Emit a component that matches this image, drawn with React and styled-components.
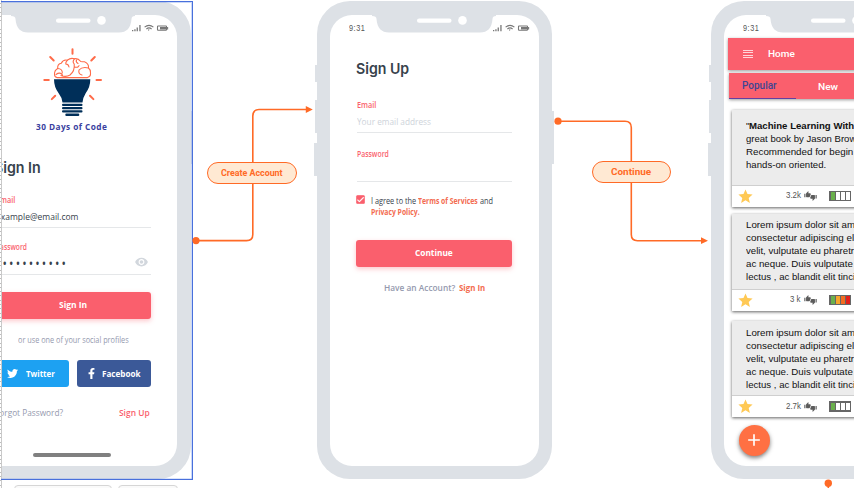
import React, { useLayoutEffect, useRef, useState } from "react";
import styled, { createGlobalStyle, css } from "styled-components";
import { MdRemoveRedEye, MdThumbDown, MdThumbUp, MdStar, MdCheck, MdAdd } from "react-icons/md";
import { FaTwitter, FaFacebookF } from "react-icons/fa";

const ui = `"Open Sans", "Noto Sans", sans-serif`;
const coral = "#fa5f6d";
const flow = "#ff6a26";

const GlobalStyle = createGlobalStyle`
  * { box-sizing: border-box; }
  html, body { margin: 0; background: #fff; overflow: hidden; }
`;

const Canvas = styled.main`
  position: relative;
  width: 855px;
  height: 488px;
  overflow: hidden;
  background: #fff;
  font-family: ${ui};
`;

const Workspace = styled.div`
  position: absolute;
  inset: 0 1px 0 2px;
  overflow: hidden;
`;

const Ruler = styled.div`
  position: absolute;
  left: 0;
  top: 0;
  width: 2px;
  height: 488px;
  border-right: 1px solid #c9c9c9;
  background: repeating-linear-gradient(#fff 0 3px, #bdbdbd 3px 4px, #fff 4px 4.3px);
`;

/* text stretched or condensed to a set measure */
const Measure = styled.span`
  display: block;
  flex: none;
  width: ${(p) => p.$w}px;
  height: ${(p) => p.$h || 12}px;
  line-height: ${(p) => p.$h || 12}px;
  white-space: pre;
  font-family: ${(p) => p.$font || ui};
  font-size: ${(p) => p.$size || 9.4}px;
  font-weight: ${(p) => p.$weight || 500};
  letter-spacing: ${(p) => p.$track || 0}px;
  color: ${(p) => p.$color || "#37424c"};
`;
const Glyphs = styled.span`
  display: inline-block;
  transform-origin: 0 50%;
`;
function Text({ children, ...rest }) {
  const ref = useRef(null);
  const [scale, setScale] = useState(1);
  useLayoutEffect(() => {
    setScale(rest.$w / ref.current.offsetWidth);
  }, [rest.$w]);
  return (
    <Measure {...rest}>
      <Glyphs ref={ref} style={{ transform: `scaleX(${scale})` }}>{children}</Glyphs>
    </Measure>
  );
}

/* ---------- phone shell ---------- */
const Shell = styled.section`
  position: absolute;
  left: ${(p) => p.$x - 2}px;
  top: 1px;
  width: 235px;
  height: 478px;
  padding: 14px 13.3px 13px 13px;
  border-radius: 33px;
  background: #dde1e6;
`;
const Screen = styled.div`
  width: 208.7px;
  height: 451px;
  border-radius: 22px;
  background: #fff;
  overflow: hidden;
`;
const SideKey = styled.i`
  position: absolute;
  top: ${(p) => p.$y}px;
  height: ${(p) => p.$h}px;
  width: 3px;
  background: #dde1e6;
  ${(p) => (p.$right ? css`right: -2px;` : css`left: ${p.$out ? -3 : -2}px;`)}
`;
const NotchArt = styled.svg`
  position: absolute;
  left: 54px;
  top: 13px;
  width: 126px;
  height: 20px;
`;
const StatusBar = styled.header`
  display: flex;
  align-items: center;
  height: 23px;
  padding: 3px 8.5px 0 19px;
`;
const StatusArt = styled.svg`
  width: 37px;
  height: 8px;
  margin-left: auto;
`;
function Phone({ x, time = true, children }) {
  return (
    <Shell $x={x}>
      <SideKey $y={64} $h={17} />
      <SideKey $y={99} $h={33} />
      <SideKey $y={142} $h={33} $out />
      <SideKey $y={110} $h={53} $right />
      <Screen>
        <StatusBar>
          {time && <Text $w={16} $h={13} $size={8.2} $track={0.6} $color="#555" $font={`"Liberation Sans", sans-serif`}>9:31</Text>}
          <StatusArt viewBox="0 0 37 8">
            <g fill="#777">
              <path d="M0 6h1.3v1.3H0zM2.3 5.2h1.3v2.1H2.3zM4.6 3.6h1.3v3.7H4.6zM7.3 1h1.3v6.3H7.3z" />
              <path d="M15.8 5.5l1.8 0-.9 1.6zM30 3h4v2.4h-6V3z" />
            </g>
            <g fill="none" stroke="#777" strokeWidth="1.1">
              <path d="M12.6 3.2Q17 -.5 21.400 3.200M14.400 5Q17 2.800 19.600 5" />
              <rect x="25.500" y="2" width="9" height="4.300" rx=".6" />
              <path d="M35.600 3v2.400" />
            </g>
          </StatusArt>
        </StatusBar>
        {children}
      </Screen>
      <NotchArt viewBox="0 0 126 20">
        <path fill="#dde1e6" d="M1 0H125V2Q121.500 2 121.500 5Q120.500 18.500 109 18.500H18Q6.500 18.500 5.500 5Q5.500 2 1 2Z" />
        <rect x="46" y="4.500" width="34.500" height="4.300" rx="2.100" fill="#fff" />
        <circle cx="91.500" cy="6.400" r="4.300" fill="#fff" />
      </NotchArt>
    </Shell>
  );
}

/* ---------- form parts ---------- */
const Form = styled.div`
  display: flex;
  flex-direction: column;
  width: 156px;
  margin-left: 26px;
`;
const Line = styled.div`
  display: flex;
  align-items: center;
  height: ${(p) => p.$h || 12}px;
  margin-top: ${(p) => p.$mt || 0}px;
  margin-left: ${(p) => p.$ml || 0}px;
  padding-left: ${(p) => p.$pl || 0}px;
  gap: ${(p) => p.$gap || 0}px;
`;
const Field = styled(Line)`
  width: 155px;
  margin-left: 1px;
  border-bottom: 1.5px solid #e5e7e9;
  align-items: flex-start;
`;
const Eye = styled(MdRemoveRedEye)`
  width: 15px;
  height: 14px;
  margin: -2px 2px 0 auto;
  color: #d2d7dd;
`;
const Button = styled.button`
  display: flex;
  align-items: center;
  justify-content: center;
  width: ${(p) => p.$w || 156}px;
  height: 27px;
  margin: ${(p) => p.$mt || 0}px 0 0;
  padding: 0 ${(p) => p.$pr || 0}px 0 0;
  border: 0;
  border-radius: 3px;
  background: ${(p) => p.$bg || coral};
  box-shadow: ${(p) => (p.$bg ? "none" : "0 2px 5px rgba(250,95,109,.35)")};
  color: #fff;
  gap: ${(p) => p.$gap || 0}px;
`;
const CheckBox = styled.span`
  display: flex;
  width: 9px;
  height: 9px;
  margin-right: 5.500px;
  border-radius: 1.500px;
  background: ${coral};
  color: #fff;
  svg { width: 9px; height: 9px; stroke-width: 1px; stroke: #fff; }
`;
const HomeBar = styled.div`
  width: 78px;
  height: 4px;
  margin: 34px 0 0 38px;
  border-radius: 2px;
  background: #808080;
`;
const LogoBlock = styled.div`
  display: flex;
  flex-direction: column;
  align-items: center;
  width: 72px;
  margin: 9px 0 0 41px;
  svg { width: 60px; height: 70px; margin-left: 1px; }
`;

function BulbLogo() {
  return (
    <svg viewBox="42 47 60 70">
      <g stroke="#ff6b49" fill="none" strokeLinecap="round" strokeWidth="2">
        <path d="M72.500 49.300v4.500M50.200 57l3.500 3.500M94.800 57l-3.500 3.500M44.300 80h4.500M96.500 80h4.500M55.200 95.700l-3.400 3.400M90 95.700l3.400 3.400" />
        <g strokeWidth="1.100">
          <path d="M57.300 77.600H87.500Q91 76.500 90.500 72.500Q90.500 69.500 88.500 68Q89 63.500 84.500 61.700Q82.300 61.700 80.800 61.500Q78 58 74.500 58.800Q70.500 57.500 67.500 60.200Q63 59.300 61.300 63.200Q57.300 63.700 57.700 68.500Q54.300 70.300 54.500 74.500Q54.500 77 57.300 77.600Z" />
          <path d="M57.700 68.500Q62.500 68.800 62.300 73M67.500 60.200Q65.500 62 65.800 64Q68.500 64 69 67M74.500 58.800Q72 61.500 74.200 64Q75 71 70 75Q66 77.500 61 75.500M74.700 67Q78.500 68 79 65.500M76.500 60Q75.500 62 78 63.500M88.500 68Q82 66.500 79 70Q78 74 82 75M56 74.500Q60 71.500 62.500 75" />
        </g>
      </g>
      <path fill="#002f59" d="M54 79.300H90.300Q90.300 87 85.800 93Q82.700 98 82.500 102.500H62.500Q62 97.500 58.500 93Q54 87 54 79.300Z" />
      <g fill="#002f59">
        <rect x="62" y="103.700" width="20.500" height="2.200" rx="1" />
        <rect x="62" y="107" width="20.500" height="2.200" rx="1" />
        <rect x="62" y="110.300" width="20.500" height="2.200" rx="1" />
        <rect x="65.300" y="113.600" width="14" height="2.400" rx="1.100" />
      </g>
    </svg>
  );
}

function SignIn() {
  return (
    <Phone x={-44.5} time={false}>
      <Form>
        <LogoBlock>
          <BulbLogo />
          <Line $mt={4}><Text $w={71.500} $size={9.400} $weight={700} $track={0.5} $color="#3a3fa0">30 Days of Code</Text></Line>
        </LogoBlock>
        <Line $h={22} $mt={24} $ml={-0.500}><Text $h={22} $w={47} $size={14.800} $weight={600} $font={`Inter, sans-serif`}>Sign In</Text></Line>
        <Line $mt={14.500} $pl={1}><Text $w={19.500} $color={coral} $size={9} $weight={600}>Email</Text></Line>
        <Field $h={17.500} $mt={5}><Text $w={82.500}>example@email.com</Text></Field>
        <Line $mt={12.500} $pl={1}><Text $w={31} $color={coral} $size={9} $weight={600}>Password</Text></Line>
        <Field $h={18} $mt={4.500}>
          <Text $w={72.500} $h={13} $size={14} $track={2.600}>•••••••••••</Text>
          <Eye />
        </Field>
        <Button $mt={16.500}><Text $w={28} $weight={700} $color="#fff">Sign In</Text></Button>
        <Line $mt={15.500} $pl={23}><Text $w={111} $color="#9499ae" $size={9}>or use one of your social profiles</Text></Line>
        <Line $h={27} $mt={14} $gap={8}>
          <Button $w={74} $bg="#1da1f2" $gap={8} $pr={2}><FaTwitter size={11} /><Text $w={28.500} $weight={700} $color="#fff">Twitter</Text></Button>
          <Button $w={74} $bg="#3b5998" $gap={5}><FaFacebookF size={11} /><Text $w={39} $weight={700} $color="#fff">Facebook</Text></Button>
        </Line>
        <Line $mt={20} $gap={56.500}>
          <Text $w={68} $color="#9499ae">Forgot Password?</Text>
          <Text $w={30.500} $color={coral} $weight={600}>Sign Up</Text>
        </Line>
        <HomeBar />
      </Form>
    </Phone>
  );
}

function SignUp() {
  const terms = { $h: 11, $size: 9 };
  const link = { ...terms, $weight: 700, $color: "#f36b50" };
  return (
    <Phone x={317}>
      <Form>
        <Line $h={22} $mt={20}><Text $h={22} $w={53.500} $size={14.800} $weight={600} $font={`Inter, sans-serif`}>Sign Up</Text></Line>
        <Line $mt={18.500} $pl={1}><Text $w={19.500} $color={coral} $size={9} $weight={600}>Email</Text></Line>
        <Field $h={17.500} $mt={5}><Text $w={74} $color="#ced3da">Your email address</Text></Field>
        <Line $mt={14.500} $pl={1}><Text $w={32} $color={coral} $size={9} $weight={600}>Password</Text></Line>
        <Field $h={18} $mt={4} />
        <Line $h={9} $mt={13}>
          <CheckBox><MdCheck /></CheckBox>
          <Line $h={11} $gap={2} $mt={3}>
            <Text $w={45.500} {...terms}>I agree to the</Text>
            <Text $w={59.500} {...link}>Terms of Services</Text>
            <Text $w={13} {...terms}>and</Text>
          </Line>
        </Line>
        <Line $h={11} $mt={2.500} $pl={14.500}><Text $w={48.500} {...link}>Privacy Policy.</Text></Line>
        <Button $mt={22.500}><Text $w={38} $weight={700} $color="#fff">Continue</Text></Button>
        <Line $mt={15.500} $pl={28} $gap={4}>
          <Text $w={71} $color="#9499ae" $weight={600}>Have an Account?</Text>
          <Text $w={26} $color="#f36b50" $weight={700}>Sign In</Text>
        </Line>
      </Form>
    </Phone>
  );
}

/* ---------- home feed ---------- */
const Feed = styled.div`
  display: flex;
  flex-direction: column;
  width: 204px;
`;
const AppBar = styled.div`
  display: flex;
  align-items: center;
  gap: 15px;
  height: 31.500px;
  margin-left: 4.300px;
  padding-left: 15px;
  background: ${coral};
  box-shadow: 0 1px 3px rgba(0,0,0,.4);
`;
const Burger = styled.span`
  width: 10px;
  height: 8px;
  background: repeating-linear-gradient(#ffd6da 0 1px, transparent 1px 2.300px);
`;
const Tabs = styled.div`
  display: flex;
  height: 26.500px;
  margin: 3px 0 0 5.300px;
  background: ${coral};
  box-shadow: 0 1px 3px rgba(0,0,0,.4);
`;
const Tab = styled.div`
  width: 67px;
  padding: ${(p) => (p.$on ? "7px 0 0 13px" : "8px 0 0 22px")};
  border-bottom: ${(p) => (p.$on ? "1.500px solid #643fa0" : "0")};
`;
const Card = styled.article`
  display: flex;
  flex-direction: column;
  height: 96.500px;
  margin: ${(p) => p.$mt}px 0 0 8.300px;
  background: #ececec;
  box-shadow: 0 1px 3px rgba(0,0,0,.62);
`;
const CardText = styled.div`
  height: 75.500px;
  padding: ${(p) => p.$pt}px 0 0 14px;
  border-bottom: 1px solid #cfcfcf;
`;
const CardFoot = styled.footer`
  display: flex;
  align-items: center;
  height: 21px;
  padding-left: 5px;
  background: #fff;
`;
const Star = styled(MdStar)`
  flex: none;
  width: 17px;
  height: 17px;
  color: #ffc955;
`;
const Count = styled.span`
  display: flex;
  justify-content: flex-end;
  width: 46.500px;
`;
const Votes = styled.span`
  display: flex;
  width: 13px;
  height: 10px;
  margin: 0 12px 0 4px;
  color: #5b5b5b;
  svg { width: 7px; height: 7px; flex: none; }
  svg + svg { margin: 3px 0 0 -1px; }
`;
const Meter = styled.span`
  display: flex;
  gap: 1.300px;
  width: 21.500px;
  height: 10.500px;
  padding: 1.300px;
  background: #666;
`;
const Cell = styled.i`
  flex: 1;
  background: ${(p) => p.$c};
`;
const Fab = styled.div`
  display: flex;
  align-items: center;
  justify-content: center;
  width: 31px;
  height: 31px;
  margin: 7.500px 0 0 15px;
  border-radius: 50%;
  background: #ff7043;
  color: #fff;
  box-shadow: 0 2px 4px rgba(0,0,0,.5);
`;
const arial = { $font: `"Liberation Sans", Arial, sans-serif`, $size: 9.8, $h: 13, $color: "#111", $weight: 400 };
const lorem = [
  ["Lorem ipsum dolor sit am", 109],
  ["consectetur adipiscing el", 108],
  ["velit, vulputate eu pharetr", 108],
  ["ac neque. Duis vulputate", 107],
  ["lectus , ac blandit elit tinci", 109],
];
const machine = [
  ["great book by Jason Brow", 110],
  ["Recommended for begin", 107],
  ["hands-on oriented.", 80.5],
];
const calm = ["#6ab04c", "#fff", "#fff", "#fff"];
const hot = ["#6ab04c", "#f7a52d", "#f36c21", "#e3201b"];

function Post({ mt, pt = 5, lines, count, countW, levels, children }) {
  return (
    <Card $mt={mt}>
      <CardText $pt={pt}>
        {children}
        {lines.map(([t, w]) => <Text key={t} {...arial} $w={w}>{t}</Text>)}
      </CardText>
      <CardFoot>
        <Star />
        <Count><Text $w={countW} $size={8.200} $color="#555" $font={`"Liberation Sans", sans-serif`}>{count}</Text></Count>
        <Votes><MdThumbUp /><MdThumbDown /></Votes>
        <Meter>{levels.map((c, i) => <Cell key={i} $c={c} />)}</Meter>
      </CardFoot>
    </Card>
  );
}

const Quote = styled.div`
  display: flex;
`;

function Home() {
  return (
    <Phone x={710.7}>
      <Feed>
        <AppBar>
          <Burger />
          <Text $w={27} $color="#fff" $size={9.600} $weight={500} $font="Roboto, sans-serif">Home</Text>
        </AppBar>
        <Tabs>
          <Tab $on><Text $w={35} $color="#3e4593" $size={10} $weight={500} $font="Roboto, sans-serif">Popular</Text></Tab>
          <Tab><Text $w={20} $color="#fff" $size={9.600} $weight={500} $font="Roboto, sans-serif">New</Text></Tab>
        </Tabs>
        <Post mt={11} pt={9} lines={machine} count="3.2k" countW={14.500} levels={calm}>
          <Quote>
            <Text {...arial} $w={3}>"</Text>
            <Text {...arial} $weight={700} $w={105}>Machine Learning With</Text>
          </Quote>
        </Post>
        <Post mt={7.500} pt={4} lines={lorem} count="3 k" countW={10.500} levels={hot} />
        <Post mt={10} pt={5} lines={lorem} count="2.7k" countW={14.500} levels={calm} />
        <Fab><MdAdd size={20} /></Fab>
      </Feed>
    </Phone>
  );
}

/* ---------- canvas overlays ---------- */
const Selection = styled.div`
  position: absolute;
  left: 1px;
  top: 1px;
  width: 192px;
  height: 479px;
  border: 1px solid #4970dc;
  border-left: 0;
  box-shadow: inset -1px 1px 0 rgba(105,145,235,.35), inset 0 -1px 0 rgba(105,145,235,.25);
`;
const Wires = styled.svg`
  position: absolute;
  left: 0;
  top: 0;
  width: 855px;
  height: 488px;
`;
const Pill = styled.div`
  position: absolute;
  left: ${(p) => p.$x}px;
  top: ${(p) => p.$y}px;
  width: ${(p) => p.$w}px;
  height: 22px;
  display: flex;
  align-items: center;
  justify-content: center;
  border: 1.500px solid ${flow};
  border-radius: 11px;
  background: #ffe9d3;
`;
const Outline = styled.div`
  position: absolute;
  left: ${(p) => p.$x}px;
  top: 485px;
  width: ${(p) => p.$w}px;
  height: 10px;
  border: 1px solid #d6d6d6;
  border-radius: 4px;
  background: #fafafa;
`;

export default function App() {
  const pill = { $font: "Roboto, sans-serif", $weight: 700, $color: flow };
  return (
    <>
      <GlobalStyle />
      <Canvas>
        <Workspace>
          <SignIn />
          <SignUp />
          <Home />
        </Workspace>
        <Ruler />
        <Outline $x={14} $w={98} />
        <Outline $x={118} $w={60} />
        <Selection />
        <Wires viewBox="0 0 855 488">
          <g fill="none" stroke={flow} strokeWidth="1.600">
            <path d="M196 240.600H246.500Q252.800 240.600 252.800 234.500V116Q252.800 109.500 259 109.500H307" />
            <path d="M558 121.200H625Q631.300 121.200 631.300 127.500V234.500Q631.300 240.700 637.500 240.700H702" />
            <path d="M828.300 484V488" />
          </g>
          <g fill={flow}>
            <circle cx="196" cy="240.600" r="3.600" />
            <circle cx="558" cy="121.200" r="3.600" />
            <circle cx="828.300" cy="483.300" r="3.700" />
            <path d="M305.800 106.100L312.800 109.500L305.800 112.900ZM701 237.300L708 240.700L701 244.100Z" />
          </g>
        </Wires>
        <Pill $x={207} $y={162} $w={90}><Text $w={62} $size={9} {...pill}>Create Account</Text></Pill>
        <Pill $x={592} $y={160.500} $w={79}><Text $w={40.500} $size={9.800} {...pill}>Continue</Text></Pill>
      </Canvas>
    </>
  );
}
